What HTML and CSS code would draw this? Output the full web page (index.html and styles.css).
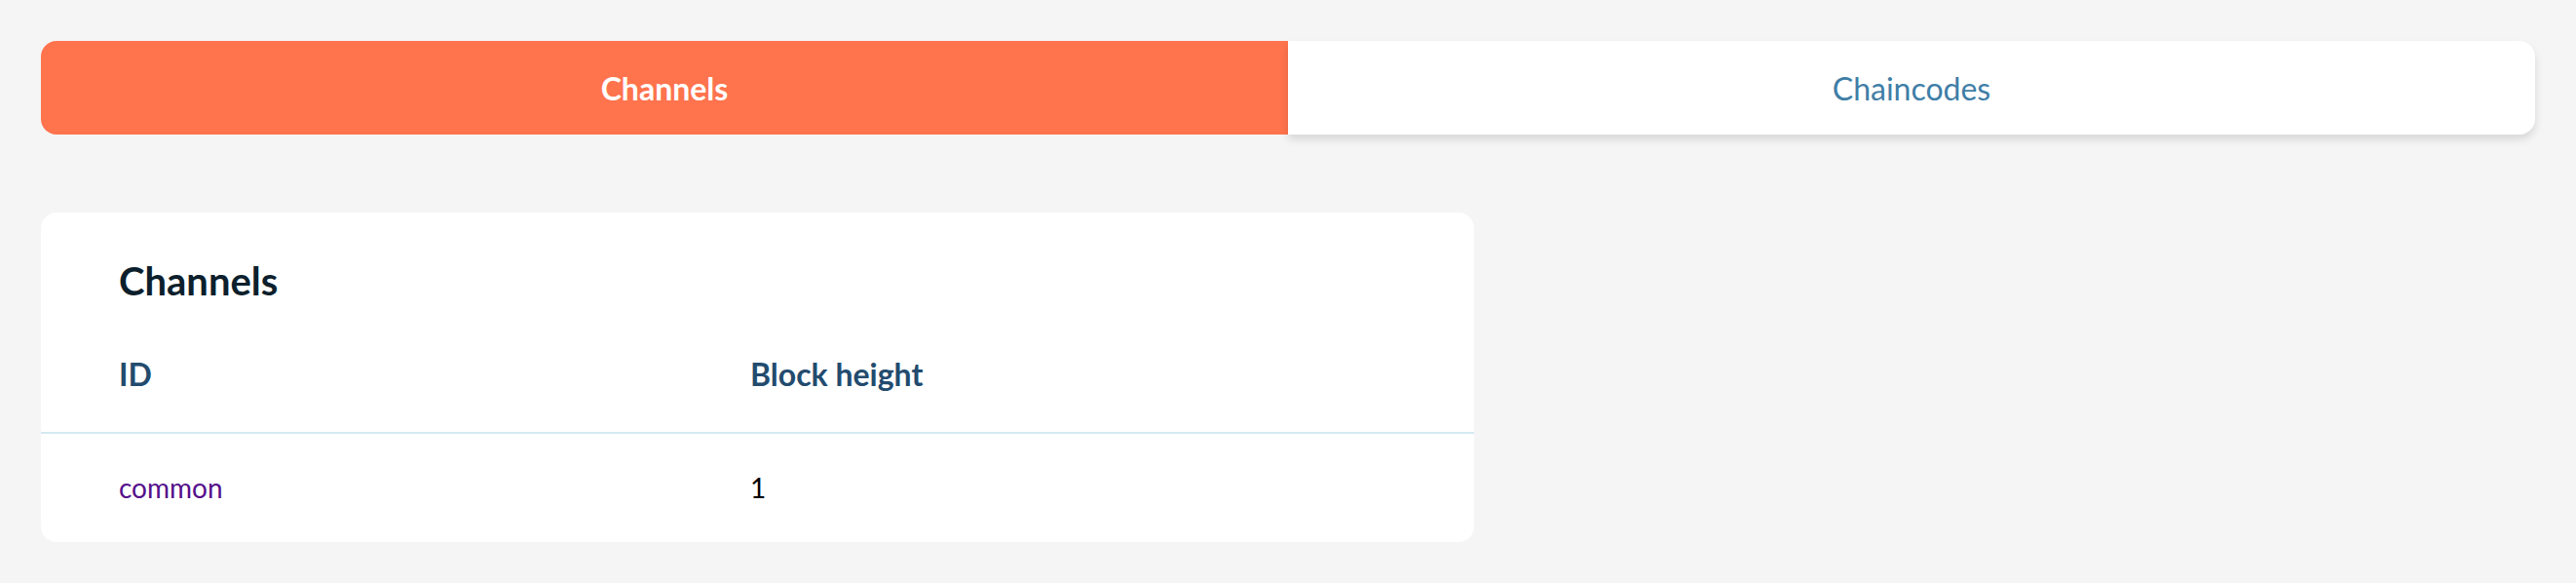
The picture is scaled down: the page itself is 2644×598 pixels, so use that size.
FILE: index.html
```html
<!DOCTYPE html>
<html>
<head>
<meta charset="utf-8">
<link rel="stylesheet" href="styles.css">
</head>
<body>
<div class="page">
  <nav class="tabs">
    <div class="tab tab-active">Channels</div>
    <div class="tab tab-idle">Chaincodes</div>
  </nav>
  <section class="card">
    <h2 class="card-title">Channels</h2>
    <div class="row row-head">
      <div class="cell">ID</div>
      <div class="cell">Block height</div>
    </div>
    <div class="row row-body">
      <div class="cell"><a class="link" href="#">common</a></div>
      <div class="cell">1</div>
    </div>
  </section>
</div>
</body>
</html>
```
FILE: styles.css
```css
html, body {
  margin: 0;
  padding: 0;
  background: #f5f5f5;
  font-family: Lato, "Open Sans", sans-serif;
}
.page {
  padding: 42px;
  width: 2560px;
}
.tabs {
  display: flex;
  height: 96px;
}
.tab {
  flex: 1;
  display: flex;
  align-items: center;
  justify-content: center;
  font-size: 32px;
}
.tab-active {
  background: #ff734d;
  color: #ffffff;
  font-weight: 700;
  border-radius: 16px 0 0 16px;
}
.tab-idle {
  background: #ffffff;
  color: #3f7ea7;
  border-radius: 0 16px 16px 0;
  box-shadow: 0 5px 8px rgba(0,0,0,0.12);
}
.card {
  margin-top: 80px;
  width: 1471px;
  background: #ffffff;
  border-radius: 16px;
  padding: 46px 0 0;
  box-sizing: border-box;
  height: 338px;
}
.card-title {
  margin: 0 0 12px;
  padding: 0 80px;
  font-size: 40px;
  line-height: 48px;
  font-weight: 700;
  color: #0d1f2c;
}
.row {
  display: grid;
  grid-template-columns: 648px 1fr;
  padding: 0 80px;
}
.row-head {
  font-size: 32px;
  font-weight: 700;
  color: #234b6e;
  padding-top: 40px;
  padding-bottom: 40px;
  border-bottom: 2px solid #d5e9f1;
}
.row-body {
  font-size: 28px;
  color: #000000;
  padding-top: 38px;
  padding-bottom: 40px;
}
.link {
  color: #550f8b;
  text-decoration: none;
}
```
